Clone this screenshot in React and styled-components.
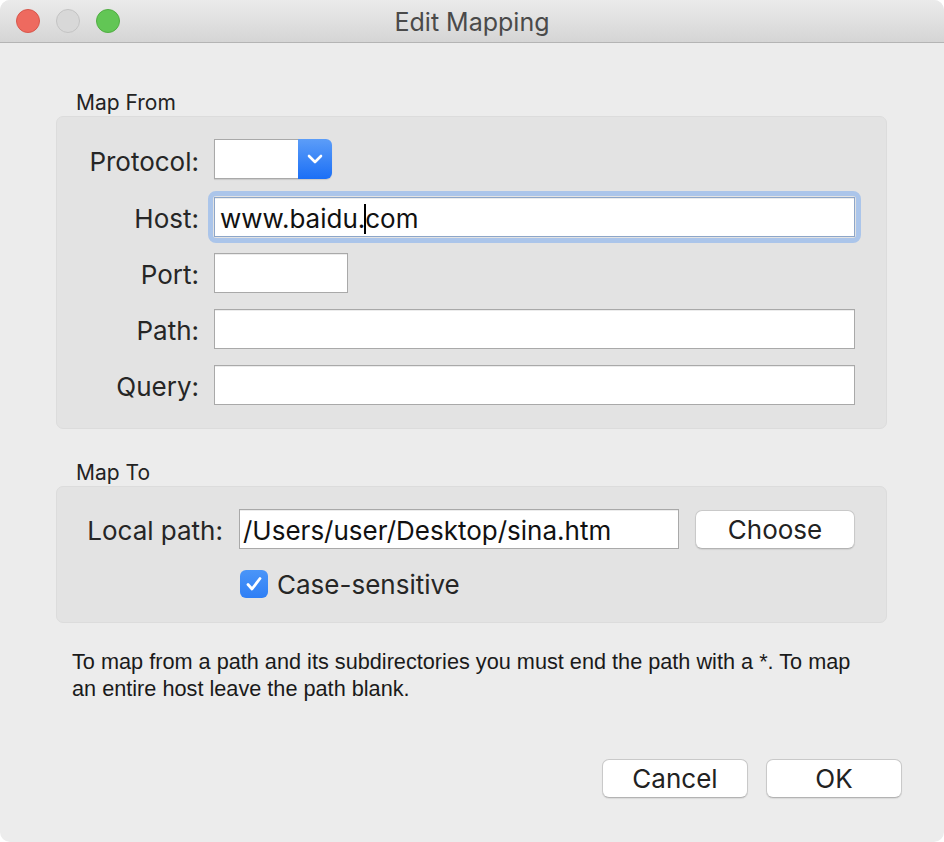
import React from 'react'
import styled, { createGlobalStyle } from 'styled-components'

const Global = createGlobalStyle`
  html, body {
    margin: 0;
    padding: 0;
    background: #ffffff;
  }
  body {
    font-family: Inter, "Liberation Sans", sans-serif;
    color: #222;
  }
`

export default function App() {
  return (
    <>
      <Global />
      <Window>
        <TitleBar>
          <Lights>
            <Light $color="#ee6a5f" $edge="#d7574c" />
            <Light $color="#d8d8d8" $edge="#c3c3c3" />
            <Light $color="#62c655" $edge="#51ad43" />
          </Lights>
          <Title>Edit Mapping</Title>
          <span />
        </TitleBar>

        <Content>
          <GroupTitle $top={48}>Map From</GroupTitle>
          <FromBox>
            <Label>Protocol:</Label>
            <Popup>
              <PopupField />
              <PopupArrow>
                <svg width="16" height="10" viewBox="0 0 16 10">
                  <path d="M2 2 L8 8 L14 2" fill="none" stroke="#fff" strokeWidth="2.6" strokeLinecap="round" strokeLinejoin="round" />
                </svg>
              </PopupArrow>
            </Popup>

            <Label>Host:</Label>
            <Field $focused>
              www.baidu.<Caret />com
            </Field>

            <Label>Port:</Label>
            <Field $width="134px" />

            <Label>Path:</Label>
            <Field />

            <Label>Query:</Label>
            <Field />
          </FromBox>

          <GroupTitle $top={32}>Map To</GroupTitle>
          <ToBox>
            <Label>Local path:</Label>
            <Field $pad={3}>/Users/user/Desktop/sina.htm</Field>
            <Button>Choose</Button>

            <CheckRow>
              <Check>
                <svg width="18" height="16" viewBox="0 0 18 16">
                  <path d="M3 8.5 L7 13 L15 2.5" fill="none" stroke="#fff" strokeWidth="2.8" strokeLinecap="round" strokeLinejoin="round" />
                </svg>
              </Check>
              Case-sensitive
            </CheckRow>
          </ToBox>

          <Help>
            To map from a path and its subdirectories you must end the path with a *. To map<br />
            an entire host leave the path blank.
          </Help>

          <Actions>
            <Button $width="146px">Cancel</Button>
            <Button $width="136px">OK</Button>
          </Actions>
        </Content>
      </Window>
    </>
  )
}

const Window = styled.div`
  width: 944px;
  height: 842px;
  background: #ececec;
  border-radius: 10px;
  overflow: hidden;
  display: flex;
  flex-direction: column;
`

const TitleBar = styled.div`
  height: 42px;
  flex-shrink: 0;
  display: grid;
  grid-template-columns: 1fr auto 1fr;
  align-items: center;
  background: linear-gradient(#ebebeb, #d5d5d5);
  border-bottom: 1px solid #b4b4b4;
`

const Lights = styled.div`
  display: flex;
  gap: 16px;
  padding-left: 16px;
`

const Light = styled.div`
  width: 22px;
  height: 22px;
  border-radius: 50%;
  background: ${p => p.$color};
  border: 1px solid ${p => p.$edge};
`

const Title = styled.div`
  font-size: 25px;
  color: #4a4a4a;
  padding-top: 1px;
`

const Content = styled.div`
  flex: 1;
  display: flex;
  flex-direction: column;
  padding: 0 57px 44px 56px;
`

const GroupTitle = styled.div`
  margin: ${p => p.$top}px 0 1px 20px;
  font-size: 21px;
  line-height: 24px;
  color: #232323;
`

const Box = styled.div`
  background: #e3e3e3;
  border: 1px solid #dcdcdc;
  border-radius: 7px;
  display: grid;
  align-items: center;
`

const FromBox = styled(Box)`
  padding: 22px 31px 23px 0;
  grid-template-columns: 142px 1fr;
  grid-template-rows: 42px repeat(4, 40px);
  column-gap: 15px;
  row-gap: 16px;
`

const ToBox = styled(Box)`
  padding: 22px 31px 24px 0;
  grid-template-columns: 166px 440px 160px;
  grid-template-rows: 40px 28px;
  column-gap: 16px;
  row-gap: 21px;
`

const Label = styled.div`
  font-size: 26px;
  color: #262626;
  text-align: right;
  white-space: nowrap;
  padding-top: 2px;
`

const Field = styled.div`
  position: relative;
  box-sizing: border-box;
  align-self: end;
  height: 40px;
  width: ${p => p.$width || '100%'};
  background: #fff;
  border: 1px solid ${p => (p.$focused ? '#8da6c9' : '#a9a9a9')};
  box-shadow: inset 0 1px 0 #ececec;
  padding: 2px 0 0 ${p => p.$pad ?? 5}px;
  font-size: 26px;
  line-height: 38px;
  color: #111;
  white-space: nowrap;

  ${p =>
    p.$focused &&
    `
    &::after {
      content: '';
      position: absolute;
      inset: -7px;
      border: 5px solid #abc5ea;
      border-radius: 8px;
      pointer-events: none;
    }
  `}
`

const Caret = styled.span`
  display: inline-block;
  width: 2px;
  height: 30px;
  background: #000;
  vertical-align: -6px;
  margin: 0 -1px 0 -1px;
`

const Popup = styled.div`
  display: flex;
  width: 118px;
  height: 40px;
  box-shadow: 0 1px 1px rgba(0, 0, 0, 0.12);
  border-radius: 0 6px 6px 0;
  align-self: start;
`

const PopupField = styled.div`
  flex: 1;
  background: #fff;
  border: 1px solid #a9a9a9;
  border-right: none;
`

const PopupArrow = styled.div`
  width: 34px;
  border-radius: 0 6px 6px 0;
  background: linear-gradient(#5c9df8, #1b6ff6);
  display: flex;
  align-items: center;
  justify-content: center;
`

const Button = styled.div`
  box-sizing: border-box;
  width: ${p => p.$width || '160px'};
  height: 39px;
  background: #fff;
  border: 1px solid #c9c9c9;
  border-bottom-color: #b3b3b3;
  border-radius: 7px;
  box-shadow: 0 1px 1px rgba(0, 0, 0, 0.08);
  display: flex;
  align-items: center;
  justify-content: center;
  font-size: 26px;
  color: #222;
`

const CheckRow = styled.div`
  grid-column: 2 / 4;
  display: flex;
  align-items: center;
  gap: 9px;
  padding-left: 1px;
  font-size: 26px;
  color: #262626;
`

const Check = styled.div`
  width: 28px;
  height: 28px;
  border-radius: 6px;
  background: linear-gradient(#4a95f8, #2f7ff5);
  display: flex;
  align-items: center;
  justify-content: center;
`

const Help = styled.p`
  margin: 25px 0 0 16px;
  font-family: "Liberation Sans Narrow", "Liberation Sans", sans-serif;
  font-size: 21.7px;
  line-height: 27px;
  color: #1a1a1a;
  white-space: nowrap;
`

const Actions = styled.div`
  margin-top: auto;
  display: flex;
  justify-content: flex-end;
  gap: 18px;
  margin-right: -15px;
`
